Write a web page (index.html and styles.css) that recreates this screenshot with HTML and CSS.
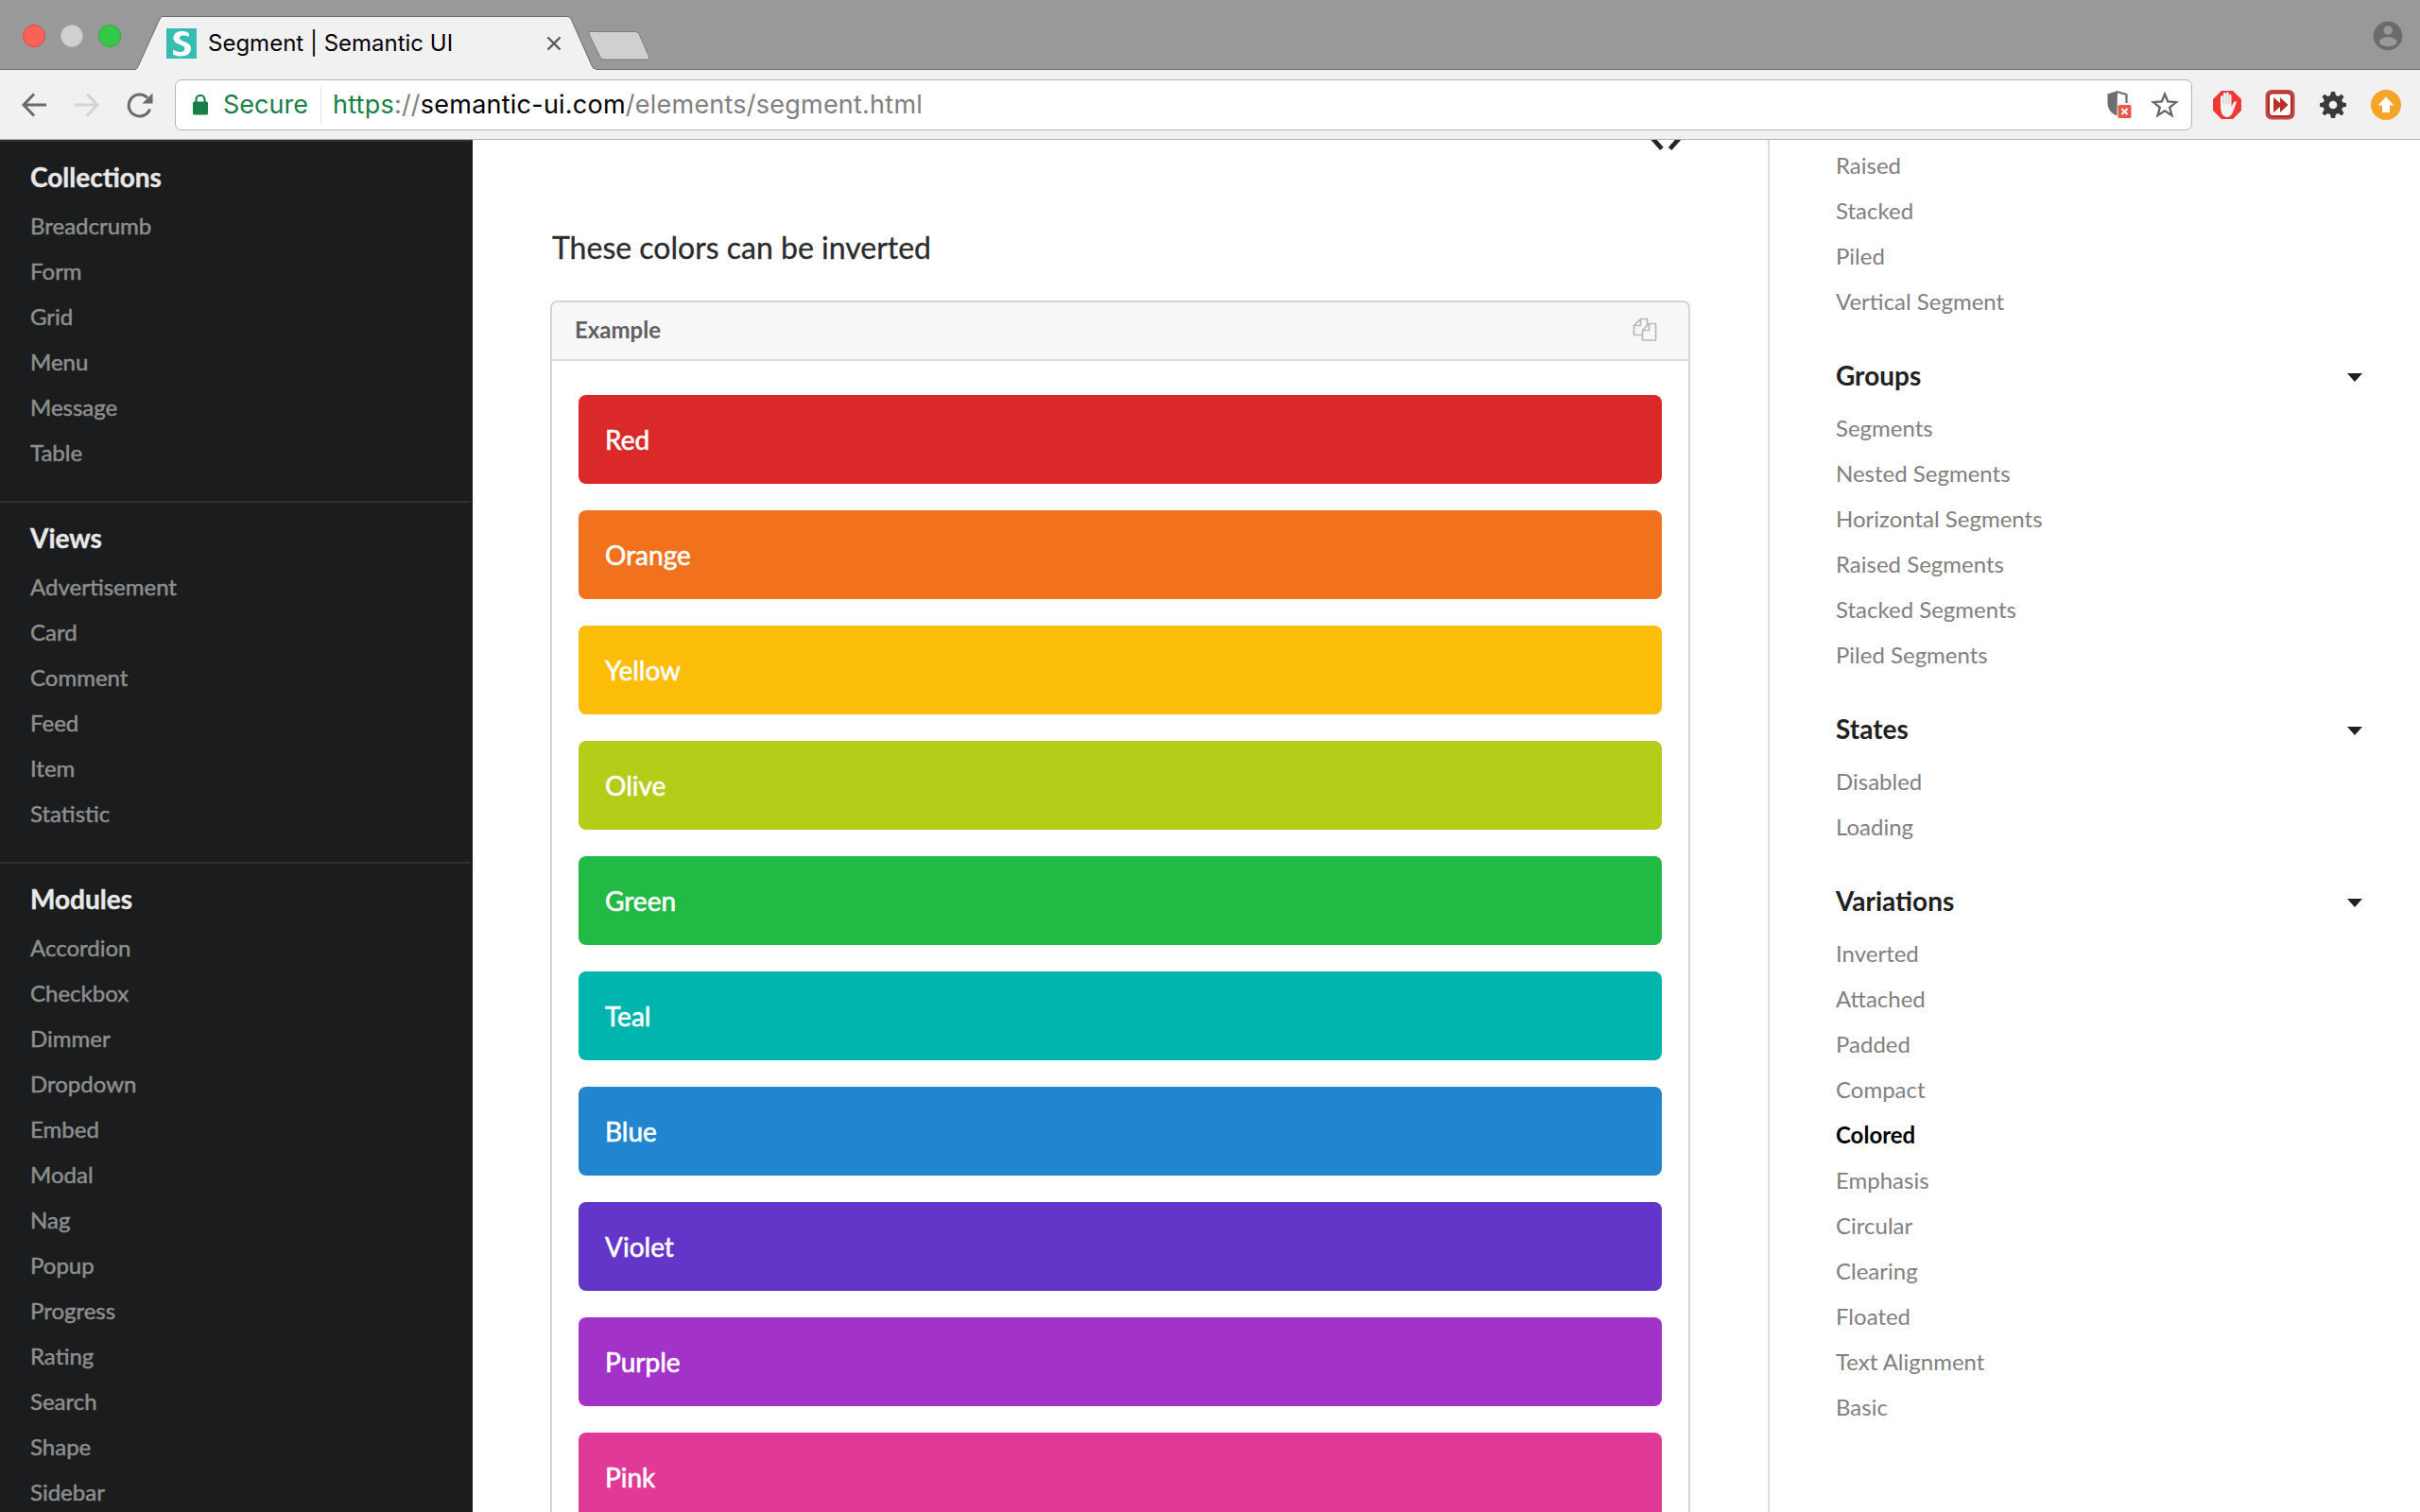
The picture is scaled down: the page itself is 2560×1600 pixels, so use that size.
FILE: index.html
```html
<!DOCTYPE html>
<html lang="en">
<head>
<meta charset="utf-8">
<title>Segment | Semantic UI</title>
<link rel="stylesheet" href="styles.css">
</head>
<body>
<header class="tabbar">
  <div class="lights"><i class="light red-light"></i><i class="light off-light"></i><i class="light green-light"></i></div>
  <div class="tab">
    <svg class="tab-shape" width="486" height="57" viewBox="0 0 486 57"><path d="M-1 56.500Q1 56 2 53.500L24.500 4Q26 .5 28 .5H456Q459 .5 460.500 4L482.500 53.500Q484 56.500 486 56.500V58H-1Z" fill="#f1f1f1" stroke="#6b6b6b"/><path d="M0 57H486V56H0Z" fill="#f1f1f1"/></svg>
    <svg class="favicon" viewBox="0 0 32 32"><rect width="32" height="32" fill="#35bdb2"/><path d="M24 9V5.500C21.500 3.500 19 3 16 3C10.500 3 7.500 6 7.500 10.500C7.500 17.500 19.500 16.800 19.500 21.500C19.500 24 17.500 25 15 25C12.500 25 10 24.300 7 22.500V27.500C9.500 29 12.500 29.500 15.500 29.500C22 29.500 26 26.500 26 21C26 13.800 14 14.500 14 10.300C14 8.500 15.300 7.600 17.300 7.600C19.800 7.600 22 8.200 24 9Z" fill="#fff"/></svg>
    <span class="tab-title">Segment | Semantic UI</span>
    <svg class="close" viewBox="0 0 16 16"><path d="M1.500 1.500L14.500 14.500M14.500 1.500L1.500 14.500" stroke="#5a5a5a" stroke-width="2.400" fill="none"/></svg>
  </div>
  <svg class="newtab" viewBox="0 0 70 34"><path d="M3.500 1.500H51Q54 1.500 55 4L65.500 28Q66.500 31 64 31H18Q15 31 14 28.500L2 4Q1.500 1.500 3.500 1.500Z" fill="#d0d0d0" stroke="#7d7d7d" stroke-width="1"/></svg>
  <svg class="profile" viewBox="0 0 32 32"><circle cx="16" cy="16" r="15.300" fill="#6b6b6b"/><circle cx="16.300" cy="10" r="4.700" fill="#999"/><ellipse cx="16.300" cy="22.300" rx="9.300" ry="5" fill="#999"/></svg>
</header>
<nav class="toolbar">
  <svg class="nav-icon back" viewBox="0 0 28 28"><path d="M14 2.500L3 14L14 25.500M3 14H27" stroke="#6a6a6a" stroke-width="3" fill="none"/></svg>
  <svg class="nav-icon forward" viewBox="0 0 28 28"><path d="M14 2.500L25 14L14 25.500M25 14H1" stroke="#d3d3d3" stroke-width="3" fill="none"/></svg>
  <svg class="nav-icon reload" viewBox="0 0 28 28"><path d="M24.500 18.500A11.500 11.500 0 1 1 22 6.500" stroke="#6a6a6a" stroke-width="3" fill="none"/><path d="M27.500 1.500V12.500H16.500Z" fill="#6a6a6a"/></svg>
  <div class="omnibox">
    <svg class="lock" viewBox="0 0 16 22"><path d="M3.500 9V5.500A4.500 4.500 0 0 1 12.500 5.500V9" stroke="#188046" stroke-width="2.200" fill="none"/><rect x="0" y="7.500" width="16" height="14" rx="1.500" fill="#188046"/></svg>
    <span class="secure">Secure</span>
    <span class="url"><span class="scheme">https</span>://<span class="host">semantic-ui.com</span>/elements/segment.html</span>
    <svg class="shield" viewBox="0 0 27 31"><path d="M12 1L1.500 4.500V14C1.500 20 5 25 11.500 27.500Z" fill="#6e6e6e"/><path d="M11 2L21.500 5V14" stroke="#6e6e6e" stroke-width="2.200" fill="none"/><rect x="12.500" y="16" width="14" height="14" rx="1.500" fill="#e25b4b"/><path d="M16.500 20L22.500 26M22.500 20L16.500 26" stroke="#fff" stroke-width="1.800"/></svg>
    <svg class="star" viewBox="0 0 30 30"><path d="M15 3.500L18.200 11.500L27 12.100L20.200 17.600L22.500 26.200L15 21.400L7.500 26.200L9.800 17.600L3 12.100L11.800 11.500Z" stroke="#666" stroke-width="2.300" fill="none"/></svg>
  </div>
  <div class="extensions">
    <svg class="ext" viewBox="0 0 32 32"><path d="M10 1H22L31 10V22L22 31H10L1 22V10Z" fill="#ee3a34"/><path d="M9 18V7Q10.500 5 12 7V4Q13.500 2 15 4V3Q16.500 1.500 18 4V5.500Q19.500 4 20.500 6V18L23 13Q25 11.500 26 13L21.500 25Q19 29 15.500 29Q9 28 9 18Z" fill="#f3f3f3"/><path d="M12 7V15M15 4V15M18 5V15" stroke="#bdbdbd" stroke-width=".8"/></svg>
    <svg class="ext" viewBox="0 0 32 32"><rect x="2.800" y="2.300" width="26.400" height="27" rx="4" fill="#fff" stroke="#c44a43" stroke-width="4.500"/><rect x="4" y="3.500" width="24" height="24.600" rx="4" fill="#fff" stroke="#b32a24" stroke-width="2"/><path d="M9 8L16 14V8L24.500 16L16 24V18L9 24Z" fill="#b93029"/></svg>
    <svg class="ext" viewBox="0 0 32 32"><path d="M14 2H18L19 6L21.500 7L25 4.800L27.500 7.300L25.200 11L26.200 13.300L30 14.200V17.800L26.200 18.800L25.200 21L27.500 24.800L25 27.200L21.500 25L19 26L18 30H14L13 26L10.500 25L7 27.200L4.500 24.800L6.800 21L5.800 18.800L2 17.800V14.200L5.800 13.300L6.800 11L4.500 7.300L7 4.800L10.500 7L13 6Z" fill="#3a3a3a"/><circle cx="16" cy="16" r="4.300" fill="#f1f1f1"/></svg>
    <svg class="ext" viewBox="0 0 32 32"><circle cx="16" cy="16" r="16" fill="#f5a427"/><path d="M16 7.500L24.500 16.500H20V24H12V16.500H7.500Z" fill="#fff"/></svg>
  </div>
</nav>
<div class="page">
  <aside class="sidebar">
    <section><h2>Collections</h2><a>Breadcrumb</a><a>Form</a><a>Grid</a><a>Menu</a><a>Message</a><a>Table</a></section>
    <section><h2>Views</h2><a>Advertisement</a><a>Card</a><a>Comment</a><a>Feed</a><a>Item</a><a>Statistic</a></section>
    <section><h2>Modules</h2><a>Accordion</a><a>Checkbox</a><a>Dimmer</a><a>Dropdown</a><a>Embed</a><a>Modal</a><a>Nag</a><a>Popup</a><a>Progress</a><a>Rating</a><a>Search</a><a>Shape</a><a>Sidebar</a></section>
  </aside>
  <main class="content">
    <svg class="code" viewBox="0 0 36 14"><path d="M2.500 -3.500L14 9.500M34.100 -3.500L22.600 9.500" stroke="#262626" stroke-width="4.800"/></svg>
    <p class="intro">These colors can be inverted</p>
    <div class="example">
      <div class="example-head"><span>Example</span>
        <svg class="copy" viewBox="0 0 26 26"><path d="M9.500 18.500H1.500V8.500L8.500 1.500H15.500V8M8.500 1.500V8.500H1.500M10.500 13.500L17.500 6.500H24.500V24H10.500ZM17.500 6.500V13.500H10.500" stroke="#bababa" stroke-width="1.700" fill="none" stroke-linejoin="round"/></svg>
      </div>
      <div class="segments">
        <div class="segment red">Red</div><div class="segment orange">Orange</div><div class="segment yellow">Yellow</div><div class="segment olive">Olive</div><div class="segment green">Green</div><div class="segment teal">Teal</div><div class="segment blue">Blue</div><div class="segment violet">Violet</div><div class="segment purple">Purple</div><div class="segment pink">Pink</div>
      </div>
    </div>
  </main>
  <aside class="toc">
    <section><a>Raised</a><a>Stacked</a><a>Piled</a><a>Vertical Segment</a></section>
    <section><h3>Groups<i class="caret"></i></h3><a>Segments</a><a>Nested Segments</a><a>Horizontal Segments</a><a>Raised Segments</a><a>Stacked Segments</a><a>Piled Segments</a></section>
    <section><h3>States<i class="caret"></i></h3><a>Disabled</a><a>Loading</a></section>
    <section><h3>Variations<i class="caret"></i></h3><a>Inverted</a><a>Attached</a><a>Padded</a><a>Compact</a><a class="active">Colored</a><a>Emphasis</a><a>Circular</a><a>Clearing</a><a>Floated</a><a>Text Alignment</a><a>Basic</a></section>
  </aside>
</div>
</body>
</html>
```
FILE: styles.css
```css
* { box-sizing: border-box; }
body { margin: 0; width: 2560px; height: 1600px; overflow: hidden; display: flex; flex-direction: column; background: #fff; font-family: Lato, sans-serif; }
svg { display: block; flex: none; }
h2, h3, p { margin: 0; }

.tabbar { height: 74px; flex: none; display: flex; background: #999; border-bottom: 1px solid #6b6b6b; }
.lights { display: flex; gap: 16px; padding: 26px 0 0 24px; width: 144px; flex: none; }
.light { width: 24px; height: 24px; border-radius: 50%; }
.red-light { background: #fc605b; border: 1px solid #e14640; }
.off-light { background: #d0d0d0; border: 1px solid #bcbcbc; }
.green-light { background: #34c84a; border: 1px solid #2bac3a; }
.tab { width: 485px; height: 57px; margin: 17px 0 -1px; display: flex; position: relative; padding-left: 32px; }
.tab-shape { position: absolute; left: 0; top: 0; }
.favicon { width: 32px; height: 32px; margin-top: 13px; position: relative; }
.tab-title { position: relative; margin: 13px 0 0 12px; width: 358px; font: 24px/32px Inter, sans-serif; color: #000; white-space: nowrap; }
.close { position: relative; width: 16px; height: 16px; margin-top: 21px; }
.newtab { width: 70px; height: 34px; margin: 32px 0 0 -8px; position: relative; }
.profile { width: 32px; height: 32px; margin: 22px 18px 0 auto; }

.toolbar { height: 74px; flex: none; display: flex; align-items: center; background: #f1f1f1; border-bottom: 1px solid #b2b2b2; }
.nav-icon { width: 28px; height: 28px; }
.back { margin-left: 22px; }
.forward { margin-left: 28px; }
.reload { margin-left: 28px; }
.omnibox { margin-left: 23px; width: 2134px; height: 54px; display: flex; align-items: center; background: #fff; border: 1px solid #b4b4b4; border-radius: 7px; font: 27px/40px Inter, sans-serif; }
.lock { width: 16px; height: 22px; margin-left: 18px; }
.secure { margin-left: 16px; width: 104px; color: #188046; border-right: 1px solid #e3e3e3; }
.url { margin-left: 12px; color: #808080; letter-spacing: .23px; }
.scheme { color: #188046; }
.host { color: #000; }
.shield { width: 27px; height: 31px; margin-left: auto; }
.star { width: 30px; height: 30px; margin: 0 13px 0 20px; }
.extensions { display: flex; gap: 24px; margin-left: 21px; }
.ext { width: 32px; height: 32px; }

.page { flex: 1; min-height: 0; display: flex; overflow: hidden; }
.sidebar { width: 500px; flex: none; background: #1b1c1d; overflow: hidden; }
.sidebar section { margin-right: 2px; border-top: 2px solid #2d2e2f; padding: 25px 32px 27px; }
.sidebar h2 { font-size: 28px; line-height: 24px; margin-bottom: 16px; color: #e8e8e8; -webkit-text-stroke: .4px; }
.sidebar a, .toc a { display: block; font-size: 24px; line-height: 48px; white-space: nowrap; }
.sidebar a { color: #8d8e8e; -webkit-text-stroke: .5px; }

.content { width: 1370px; flex: none; padding: 0 82px; display: flex; flex-direction: column; }
.code { width: 36px; height: 14px; margin-left: 1162px; }
.intro { margin-top: 80px; font-size: 32px; line-height: 40px; color: #2b2b2b; padding-left: 2px; -webkit-text-stroke: .3px; }
.example { margin-top: 36px; flex: none; border: 2px solid #d4d4d5; border-bottom: 0; border-radius: 8px 8px 0 0; width: 1206px; }
.example-head { height: 62px; border-bottom: 2px solid #dcdcdc; background: #f7f7f7; border-radius: 6px 6px 0 0; display: flex; align-items: center; justify-content: space-between; padding: 0 33px 2px 24px; color: #616161; font-size: 24px; line-height: 28px; font-weight: 700; }
.copy { width: 26px; height: 26px; }
.segments { padding: 36px 28px 0; display: flex; flex-direction: column; gap: 28px; }
.segment { height: 94px; padding: 0 28px; border-radius: 8px; line-height: 94px; font-size: 28px; color: #fff; -webkit-text-stroke: .6px; }
.red { background: #db2828; }
.orange { background: #f2711c; }
.yellow { background: #fbbd08; }
.olive { background: #b5cc18; }
.green { background: #21ba45; }
.teal { background: #00b5ad; }
.blue { background: #2185d0; }
.violet { background: #6435c9; }
.purple { background: #a333c8; }
.pink { background: #e03997; }

.toc { flex: 1; border-left: 2px solid #dcdcdc; padding: 3px 60px 0 70px; }
.toc a { color: #808080; }
.toc .active { color: #000; font-weight: 700; }
.toc h3 { height: 86px; padding: 40px 0 18px; display: flex; justify-content: space-between; align-items: center; font-size: 28px; line-height: 28px; color: #212121; }
.caret { margin: 4px 1px 0 0; border: 8px solid transparent; border-top: 9px solid #212121; border-bottom: 0; }
```
